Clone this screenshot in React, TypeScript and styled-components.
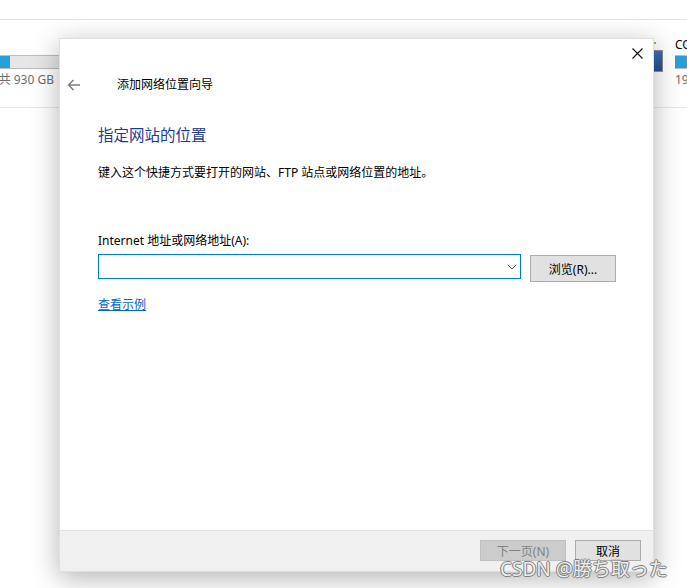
import styled, { createGlobalStyle } from 'styled-components';

const GlobalStyle = createGlobalStyle`
	html, body {
		margin: 0;
		padding: 0;
		background: #ffffff;
	}
	body {
		font-family: 'Noto Sans', 'Noto Sans CJK SC', sans-serif;
		color: #000;
	}
`;

var BackArrow = () => (
	<svg width='14' height='12' viewBox='0 0 14 12'>
		<path d='M13 6H1.5M6.5 1L1.5 6l5 5' fill='none' stroke='#7a7a7a' strokeWidth='1.4' />
	</svg>
);

var CloseIcon = () => (
	<svg width='11' height='11' viewBox='0 0 11 11'>
		<path d='M0.5 0.5l10 10M10.5 0.5l-10 10' stroke='#111' strokeWidth='1.1' />
	</svg>
);

var Chevron = () => (
	<svg width='10' height='6' viewBox='0 0 10 6'>
		<path d='M0.8 0.8L5 5l4.2-4.2' fill='none' stroke='#555' strokeWidth='1' />
	</svg>
);

// drive icon, mostly hidden behind the dialog
var DriveIcon = () => (
	<svg width='34' height='32' viewBox='0 0 34 32' style={{ flexShrink: 0 }}>
		<defs>
			<linearGradient id='drv' x1='0' y1='0' x2='1' y2='1'>
				<stop offset='0' stopColor='#5a8ad0' />
				<stop offset='1' stopColor='#1d4d8f' />
			</linearGradient>
		</defs>
		<rect x='25' y='1' width='2' height='2' fill='#6cc24a' />
		<rect x='0.5' y='9.5' width='33' height='21' fill='url(#drv)' stroke='#8f8f8f' />
	</svg>
);

var App = () => {
	return (
		<Desktop>
			<GlobalStyle />
			<Explorer>
				<Toolbar />
				<DriveRow>
					<LeftDrive>
						<Bar fillWidth={10} />
						<DriveText>共 930 GB</DriveText>
					</LeftDrive>
					<RightDrive>
						<DriveIcon />
						<DriveInfo>
							<DriveName>CONTENT (D:)</DriveName>
							<Bar fillWidth={60} />
							<DriveText>19.4 GB 可用，共 60 GB</DriveText>
						</DriveInfo>
					</RightDrive>
				</DriveRow>
			</Explorer>

			<Dialog>
				<TitleBar>
					<CloseButton>
						<CloseIcon />
					</CloseButton>
				</TitleBar>
				<Header>
					<BackButton>
						<BackArrow />
					</BackButton>
					<WizardTitle>添加网络位置向导</WizardTitle>
				</Header>
				<Body>
					<Heading>指定网站的位置</Heading>
					<Description>键入这个快捷方式要打开的网站、FTP 站点或网络位置的地址。</Description>
					<Label>Internet 地址或网络地址(A):</Label>
					<InputRow>
						<Combo>
							<ComboInput />
							<Chevron />
						</Combo>
						<Button>浏览(R)...</Button>
					</InputRow>
					<Link>查看示例</Link>
				</Body>
				<Footer>
					<Button disabled small>
						下一页(N)
					</Button>
					<Button small narrow>
						取消
					</Button>
				</Footer>
			</Dialog>

			<Watermark>CSDN @勝ち取った</Watermark>
		</Desktop>
	);
};
export default App;

var Desktop = styled.div`
	position: relative;
	width: 687px;
	height: 588px;
	overflow: hidden;
	background: #ffffff;
`;

var Explorer = styled.div`
	display: flex;
	flex-direction: column;
`;

var Toolbar = styled.div`
	height: 19px;
	border-bottom: 1px solid #e5e5e5;
`;

var DriveRow = styled.div`
	display: flex;
	justify-content: space-between;
	height: 87px;
	border-bottom: 1px solid #e8e8e8;
`;

var LeftDrive = styled.div`
	width: 60px;
	overflow: hidden;
	display: flex;
	flex-direction: column;
	align-items: flex-end;
	padding-top: 35px;
`;

var RightDrive = styled.div`
	width: 58px;
	overflow: hidden;
	display: flex;
	align-items: flex-start;
	gap: 12px;
	padding-top: 21px;
	flex-shrink: 0;
`;

var DriveInfo = styled.div`
	display: flex;
	flex-direction: column;
	flex-shrink: 0;
	width: 160px;
`;

var DriveName = styled.div`
	font-size: 12px;
	line-height: 14px;
	white-space: nowrap;
	margin-top: -3px;
	margin-bottom: 3px;
`;

var Bar = styled.div<{ fillWidth: number }>`
	align-self: stretch;
	height: 14px;
	flex-shrink: 0;
	box-sizing: border-box;
	background: linear-gradient(to right, #26a0da ${(p) => p.fillWidth}px, #e6e6e6 0);
	border: 1px solid #bcbcbc;
	border-left: none;
`;

var DriveText = styled.div`
	font-size: 12px;
	line-height: 16px;
	margin-top: 3px;
	padding-right: 6px;
	color: #6d6d6d;
	white-space: nowrap;
`;

var Dialog = styled.div`
	position: absolute;
	left: 59px;
	top: 38px;
	width: 595px;
	height: 534px;
	box-sizing: border-box;
	background: #ffffff;
	border: 1px solid rgba(0, 0, 0, 0.12);
	box-shadow: 0 6px 26px rgba(0, 0, 0, 0.3);
	display: flex;
	flex-direction: column;
`;

var TitleBar = styled.div`
	display: flex;
	justify-content: flex-end;
	height: 28px;
`;

var CloseButton = styled.div`
	width: 32px;
	height: 28px;
	display: flex;
	align-items: center;
	justify-content: center;
`;

var Header = styled.div`
	display: flex;
	align-items: center;
	height: 36px;
	padding-left: 7px;
`;

var BackButton = styled.div`
	width: 14px;
	display: flex;
	align-items: center;
	margin-right: 36px;
`;

var WizardTitle = styled.div`
	font-size: 12px;
	line-height: 16px;
	color: #000;
`;

var Body = styled.div`
	display: flex;
	flex-direction: column;
	align-items: flex-start;
	padding: 21px 37px 0 38px;
`;

var Heading = styled.div`
	font-size: 15.5px;
	line-height: 22px;
	color: #1f3a93;
`;

var Description = styled.div`
	font-size: 12px;
	line-height: 18px;
	margin-top: 18px;
`;

var Label = styled.div`
	font-size: 12px;
	line-height: 18px;
	margin-top: 50px;
`;

var InputRow = styled.div`
	display: flex;
	align-items: flex-start;
	gap: 9px;
	margin-top: 4px;
	align-self: stretch;
`;

var Combo = styled.div`
	flex: 1;
	height: 25px;
	box-sizing: border-box;
	border: 1px solid #0078d7;
	display: flex;
	align-items: center;
	padding-right: 3px;
`;

var ComboInput = styled.div`
	flex: 1;
`;

var Button = styled.div<{ disabled?: boolean; small?: boolean; narrow?: boolean }>`
	width: ${(p) => (p.narrow ? 66 : 86)}px;
	height: ${(p) => (p.small ? 21 : 27)}px;
	margin-top: ${(p) => (p.small ? 0 : 1)}px;
	box-sizing: border-box;
	display: flex;
	align-items: center;
	justify-content: center;
	font-size: 12px;
	background: ${(p) => (p.disabled ? '#cccccc' : '#e1e1e1')};
	border: 1px solid ${(p) => (p.disabled ? '#bfbfbf' : '#adadad')};
	color: ${(p) => (p.disabled ? '#838383' : '#000')};
`;

var Link = styled.div`
	font-size: 12px;
	line-height: 18px;
	margin-top: 14px;
	color: #0066cc;
	text-decoration: underline;
`;

var Footer = styled.div`
	margin-top: auto;
	height: 41px;
	background: #f0f0f0;
	border-top: 1px solid #dfdfdf;
	display: flex;
	justify-content: flex-end;
	align-items: flex-start;
	gap: 9px;
	padding: 9px 12px 0 0;
	box-sizing: border-box;
`;

var Watermark = styled.div`
	position: absolute;
	left: 500px;
	top: 556px;
	font-family: 'Noto Sans', 'Noto Sans CJK JP', sans-serif;
	font-size: 19px;
	line-height: 26px;
	color: #ececec;
	white-space: nowrap;
	text-shadow: 1px 0 0 #7f7f7f, -1px 0 0 #7f7f7f, 0 1px 0 #7f7f7f, 0 -1px 0 #7f7f7f;
`;
